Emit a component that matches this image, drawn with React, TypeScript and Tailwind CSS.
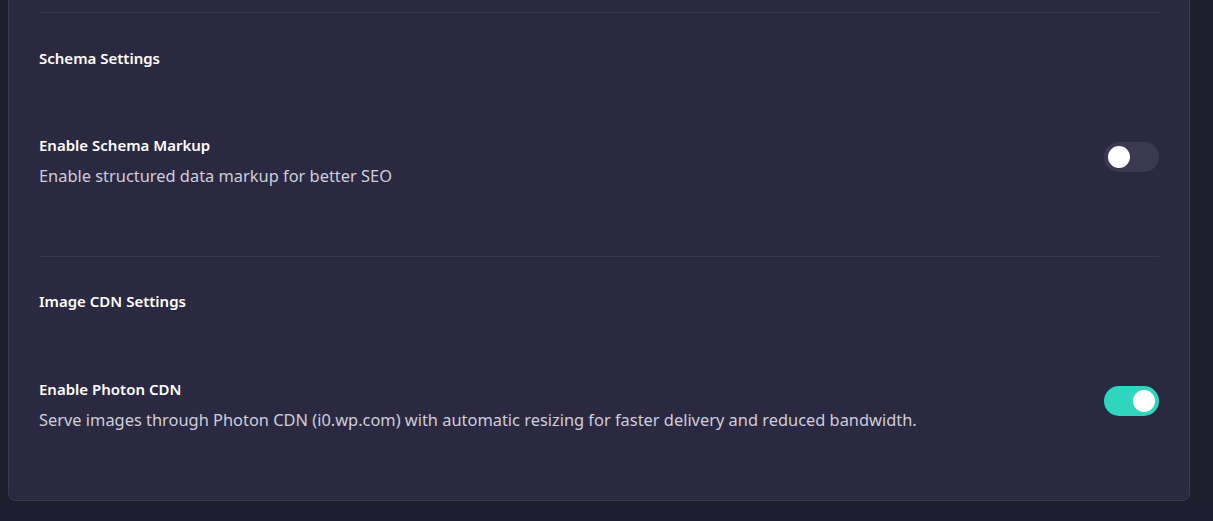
function Toggle({ on }: { on: boolean }) {
  return (
    <button
      type="button"
      aria-pressed={on}
      className={`mb-[8px] flex h-[30px] w-[55px] shrink-0 items-center rounded-full px-[4px] ${
        on ? "justify-end bg-[#2fd5bd]" : "justify-start bg-[#3a3853]"
      }`}
    >
      <span className="h-[22px] w-[22px] rounded-full bg-white" />
    </button>
  );
}

function SettingRow({ title, desc, on }: { title: string; desc: string; on: boolean }) {
  return (
    <div className="flex items-center justify-between">
      <div className="flex flex-col">
        <span className="text-[15px] leading-[20px] font-semibold text-white">{title}</span>
        <span className="mt-[10px] text-[16.4px] leading-[22px] text-[#cfcedb]">{desc}</span>
      </div>
      <Toggle on={on} />
    </div>
  );
}

export default function App() {
  return (
    <div
      className="min-h-[521px] w-full bg-[#1f1e2f] pl-[8px] pr-[23px]"
      style={{ fontFamily: '"Noto Sans", "Open Sans", sans-serif' }}
    >
      <div className="rounded-b-lg border border-t-0 border-[#3b3956] bg-[#2a2941] px-[30px] pt-[12px] pb-[69px]">
        <div className="h-px bg-[#3a3851]" />
        <h3 className="mt-[35px] text-[15px] leading-[20px] font-semibold text-white">Schema Settings</h3>
        <div className="mt-[67px]">
          <SettingRow
            title="Enable Schema Markup"
            desc="Enable structured data markup for better SEO"
            on={false}
          />
        </div>
        <div className="mt-[69px] h-px bg-[#3a3851]" />
        <h3 className="mt-[34px] text-[15px] leading-[20px] font-semibold text-white">Image CDN Settings</h3>
        <div className="mt-[68px]">
          <SettingRow
            title="Enable Photon CDN"
            desc="Serve images through Photon CDN (i0.wp.com) with automatic resizing for faster delivery and reduced bandwidth."
            on={true}
          />
        </div>
      </div>
    </div>
  );
}
